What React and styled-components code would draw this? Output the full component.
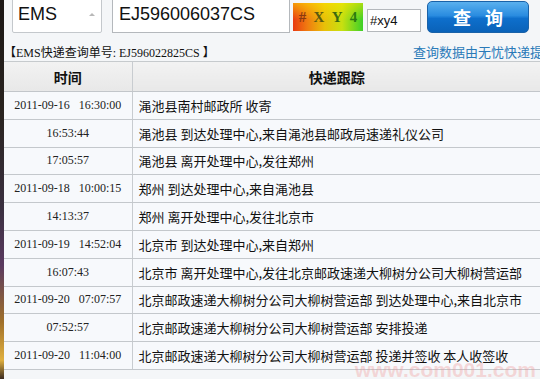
import React from "react";
import styled, { createGlobalStyle } from "styled-components";

const GlobalStyle = createGlobalStyle`
  html, body {
    margin: 0;
    padding: 0;
    background: #f4f6f8;
  }
  body {
    width: 540px;
    height: 379px;
    overflow: hidden;
  }
`;

const Screen = styled.div`
  display: flex;
  width: 540px;
  height: 379px;
  overflow: hidden;
  position: relative;
`;

const Strip = styled.div`
  width: 4px;
  flex: none;
  background: linear-gradient(
    to bottom,
    #1a1614 0%,
    #2a2420 30%,
    #3a3040 55%,
    #5a3a60 70%,
    #a0702a 85%,
    #e0b040 95%,
    #3a2a20 100%
  );
`;

const Panel = styled.div`
  flex: 1;
  display: flex;
  flex-direction: column;
  background: #f4f6f8;
  min-width: 0;
`;

const Form = styled.div`
  display: flex;
  align-items: flex-start;
  height: 37px;
  padding-left: 8px;
  margin-top: -4px;
`;

const Select = styled.div`
  box-sizing: border-box;
  width: 90px;
  height: 37px;
  background: #fff;
  border: 1px solid #c4c8cc;
  border-radius: 2px;
  display: flex;
  align-items: center;
  justify-content: space-between;
  padding: 0 6px 0 5px;
  font: 18px "Liberation Sans", Arial, sans-serif;
  color: #111;
  margin-right: 10px;
`;

const Arrow = styled.span`
  width: 0;
  height: 0;
  border-left: 3px solid transparent;
  border-right: 3px solid transparent;
  border-bottom: 3px solid #b8b8b8;
`;

const Input = styled.div`
  box-sizing: border-box;
  width: ${p => p.$w}px;
  height: ${p => p.$h}px;
  margin-top: ${p => p.$top || 0}px;
  background: #fff;
  border: 1px solid #b4b8bc;
  display: flex;
  align-items: center;
  padding-left: ${p => p.$pad || 5}px;
  font: ${p => p.$size}px "Liberation Sans", Arial, sans-serif;
  color: #111;
`;

const Captcha = styled.div`
  box-sizing: border-box;
  width: 70px;
  height: 28px;
  margin: 7px 4px 0 3px;
  background:
    linear-gradient(to bottom, rgba(255, 230, 0, 0.55) 0%, rgba(255, 200, 0, 0) 60%),
    linear-gradient(to right, #e83a12 0%, #f07a10 20%, #e8c008 45%, #c8e010 70%, #3cd028 100%);
  display: flex;
  align-items: center;
  justify-content: space-around;
  padding: 0 2px;
  font: bold 15px "Liberation Serif", serif;
`;

const Glyph = styled.span`
  color: ${p => p.$c};
`;

const Button = styled.div`
  box-sizing: border-box;
  width: 102px;
  height: 32px;
  margin: 5px 0 0 6px;
  border: 1px solid #1a62a8;
  border-radius: 5px;
  background: linear-gradient(to bottom, #5ab0ee 0%, #2a8ce0 45%, #0e6fcc 55%, #0a62b8 100%);
  display: flex;
  align-items: center;
  justify-content: center;
  gap: 14px;
  color: #fff;
  font: bold 18px "Noto Sans CJK SC", sans-serif;
`;

const InfoBar = styled.div`
  box-sizing: border-box;
  display: flex;
  align-items: flex-end;
  justify-content: space-between;
  height: 29px;
  border-bottom: 1px solid #c6cacd;
  white-space: nowrap;
  overflow: hidden;
  line-height: 16px;
`;

const Query = styled.span`
  font: 12px/16px "Liberation Serif", "Noto Sans CJK SC", serif;
  color: #111;
`;

const Credit = styled.span`
  font: 13px/18px "Noto Sans CJK SC", sans-serif;
  color: #2a7ab8;
  margin-right: -16px;
`;

const Table = styled.table`
  width: 538px;
  border-collapse: collapse;
  table-layout: fixed;
`;

const Head = styled.th`
  height: 29px;
  background: linear-gradient(to bottom, #f2f2f2, #e8e8e8);
  border-bottom: 1px solid #c2c6ca;
  border-right: 1px solid #c8ccd0;
  font: bold 14px "Noto Sans CJK SC", sans-serif;
  color: #111;
  text-align: center;
  padding: 0;
`;

const Row = styled.tr`
  background: #f7f9fc;
`;

const TimeCell = styled.td`
  height: 26.8px;
  padding: 0;
  border-bottom: 1px solid #c4c8cc;
  border-right: 1px solid #c8ccd0;
  text-align: center;
  font: 12px "Liberation Serif", serif;
  color: #222;
  white-space: pre;
`;

const TrackCell = styled.td`
  height: 26.8px;
  padding: 0 0 0 6px;
  border-bottom: 1px solid #c4c8cc;
  font: 13px "Noto Sans CJK SC", sans-serif;
  color: #111;
  white-space: nowrap;
  overflow: hidden;
`;

const Watermark = styled.div`
  position: absolute;
  right: 4px;
  bottom: -3px;
  font: bold 21px "Liberation Sans", Arial, sans-serif;
  color: rgba(240, 150, 150, 0.35);
  pointer-events: none;
`;

const rows = [
  ["2011-09-16   16:30:00", "渑池县南村邮政所 收寄"],
  ["16:53:44", "渑池县 到达处理中心,来自渑池县邮政局速递礼仪公司"],
  ["17:05:57", "渑池县 离开处理中心,发往郑州"],
  ["2011-09-18   10:00:15", "郑州 到达处理中心,来自渑池县"],
  ["14:13:37", "郑州 离开处理中心,发往北京市"],
  ["2011-09-19   14:52:04", "北京市 到达处理中心,来自郑州"],
  ["16:07:43", "北京市 离开处理中心,发往北京邮政速递大柳树分公司大柳树营运部"],
  ["2011-09-20   07:07:57", "北京邮政速递大柳树分公司大柳树营运部 到达处理中心,来自北京市"],
  ["07:52:57", "北京邮政速递大柳树分公司大柳树营运部 安排投递"],
  ["2011-09-20   11:04:00", "北京邮政速递大柳树分公司大柳树营运部 投递并签收 本人收签收"],
];

export default function App() {
  return (
    <Screen>
      <GlobalStyle />
      <Strip />
      <Panel>
        <Form>
          <Select>
            EMS
            <Arrow />
          </Select>
          <Input $w={178} $h={37} $size={18} $pad={6}>
            EJ596006037CS
          </Input>
          <Captcha>
            <Glyph $c="#8a3a10">#</Glyph>
            <Glyph $c="#5a5a10">X</Glyph>
            <Glyph $c="#3a6a10">Y</Glyph>
            <Glyph $c="#2a7a10">4</Glyph>
          </Captcha>
          <Input $w={54} $h={23} $top={13} $size={13} $pad={2}>
            #xy4
          </Input>
          <Button>
            <span>查</span>
            <span>询</span>
          </Button>
        </Form>
        <InfoBar>
          <Query>【EMS快递查询单号: EJ596022825CS 】</Query>
          <Credit>查询数据由无忧快递提供</Credit>
        </InfoBar>
        <Table>
          <colgroup>
            <col style={{ width: 128 }} />
            <col />
          </colgroup>
          <thead>
            <tr>
              <Head>时间</Head>
              <Head>快递跟踪</Head>
            </tr>
          </thead>
          <tbody>
            {rows.map(([time, text], i) => (
              <Row key={i}>
                <TimeCell>{time}</TimeCell>
                <TrackCell>{text}</TrackCell>
              </Row>
            ))}
          </tbody>
        </Table>
      </Panel>
      <Watermark>www.com001.com</Watermark>
    </Screen>
  );
}
